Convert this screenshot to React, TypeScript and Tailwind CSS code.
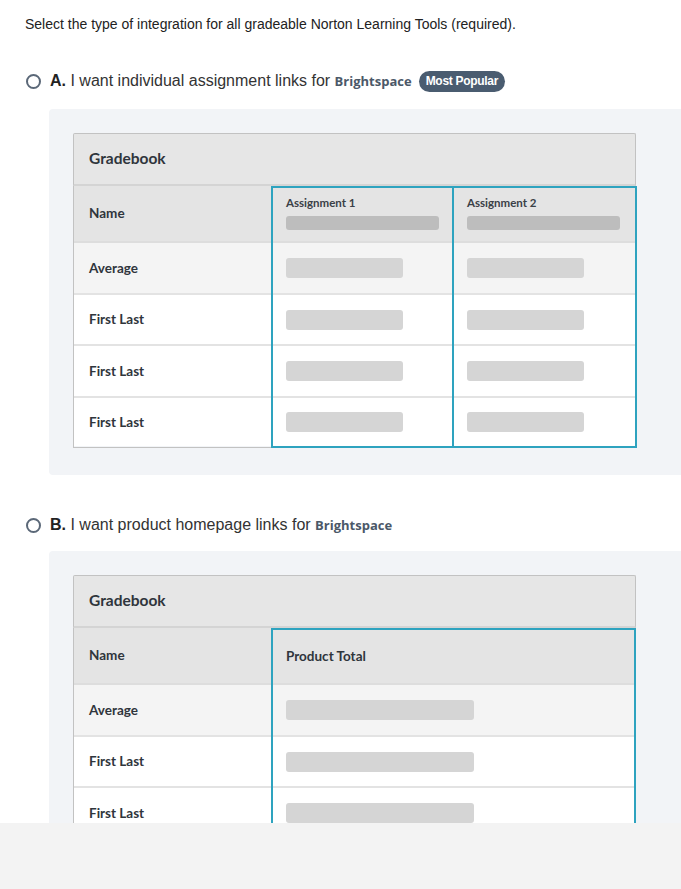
import React from 'react';

const teal = 'border-[#2ea3bf]';

const Bar = ({ w, head }: { w: string; head?: boolean }) => (
  <div className={`${w} ${head ? 'h-[14px] bg-[#bdbdbd]' : 'h-[20px] bg-[#d5d5d5]'} rounded-[3px]`} />
);

const rowStyles = [
  'h-[55px] bg-[#e4e4e4]',
  'h-[52px] bg-[#f4f4f4] border-t-2 border-[#dddddd]',
  'h-[51px] bg-white border-t-2 border-[#e3e3e3]',
  'h-[52px] bg-white border-t-2 border-[#e3e3e3]',
  'h-[50px] bg-white border-t-2 border-[#e3e3e3]',
];

const names = ['Name', 'Average', 'First Last', 'First Last', 'First Last'];

const NameColumn = () => (
  <div className="w-[198px] shrink-0 border-l border-b border-[#c2c2c2]">
    {names.map((n, i) => (
      <div key={i} className={`${rowStyles[i]} flex items-center pl-[15px]`}>
        <span className="text-[13.5px] font-bold text-[#2f353c]">{n}</span>
      </div>
    ))}
  </div>
);

const AssignmentColumn = ({ title, first }: { title: string; first?: boolean }) => (
  <div className={`w-[183px] shrink-0 border-t-2 border-b-2 border-r-2 ${first ? 'border-l-2' : ''} ${teal}`}>
    {rowStyles.map((r, i) =>
      i === 0 ? (
        <div key={i} className="h-[53px] bg-[#e4e4e4] flex flex-col pt-[7px] pl-[13px]">
          <span className="text-[11.5px] font-bold text-[#3a4047] leading-[15px]">{title}</span>
          <div className="mt-[6px]">
            <Bar w="w-[153px]" head />
          </div>
        </div>
      ) : (
        <div key={i} className={`${r} flex items-center pl-[13px]`}>
          <Bar w="w-[117px]" />
        </div>
      )
    )}
  </div>
);

const TotalColumn = () => (
  <div className={`w-[365px] shrink-0 border-2 ${teal}`}>
    {rowStyles.map((r, i) =>
      i === 0 ? (
        <div key={i} className="h-[53px] bg-[#e4e4e4] flex items-center pl-[13px]">
          <span className="text-[13.5px] font-bold text-[#2f353c]">Product Total</span>
        </div>
      ) : (
        <div key={i} className={`${r} flex items-center pl-[13px]`}>
          <Bar w="w-[188px]" />
        </div>
      )
    )}
  </div>
);

const Gradebook = ({ children }: { children: React.ReactNode }) => (
  <div className="w-[563px] font-['Lato',sans-serif]">
    <div className="h-[53px] bg-[#e6e6e6] border border-b-2 border-[#c2c2c2] border-b-[#d4d4d4] flex items-center pl-[15px] rounded-t-[2px]">
      <span className="text-[15.5px] font-bold text-[#2f353c]">Gradebook</span>
    </div>
    <div className="flex">
      <NameColumn />
      {children}
    </div>
  </div>
);

const Radio = () => (
  <span className="w-[15px] h-[15px] rounded-full border-2 border-[#5b6878] bg-white shrink-0" />
);

const Option = ({ letter, text, badge }: { letter: string; text: string; badge?: boolean }) => (
  <div className="flex items-center gap-[9px] pl-[26px] h-[24px] font-['Liberation_Sans',Arial,sans-serif]">
    <Radio />
    <span className="text-[16px] text-[#333333] whitespace-nowrap">
      <b className="text-[#222]">{letter}.</b> {text}{' '}
      <span className="font-['Open_Sans',sans-serif] font-bold text-[13px] text-[#4b5868]">Brightspace</span>
    </span>
    {badge && (
      <span className="ml-[-2px] h-[21px] px-[7px] rounded-full bg-[#4a5c70] text-white text-[12px] font-bold tracking-[-0.3px] flex items-center whitespace-nowrap">
        Most Popular
      </span>
    )}
  </div>
);

const Panel = ({ children, h }: { children: React.ReactNode; h: string }) => (
  <div className={`ml-[49px] ${h} bg-[#f2f4f7] rounded-l-[4px] pt-[24px] pl-[24px]`}>{children}</div>
);

export default function App() {
  return (
    <div className="w-full h-[889px] bg-white flex flex-col overflow-hidden">
      <div className="h-[823px] overflow-hidden shrink-0">
        <p className="pt-[16px] pl-[25px] text-[14px] leading-[17px] text-[#222] font-['Liberation_Sans',Arial,sans-serif]">
          Select the type of integration for all gradeable Norton Learning Tools (required).
        </p>
        <div className="mt-[36px]">
          <Option letter="A" text="I want individual assignment links for" badge />
        </div>
        <div className="mt-[16px]">
          <Panel h="h-[366px]">
            <Gradebook>
              <AssignmentColumn title="Assignment 1" first />
              <AssignmentColumn title="Assignment 2" />
            </Gradebook>
          </Panel>
        </div>
        <div className="mt-[38px]">
          <Option letter="B" text="I want product homepage links for" />
        </div>
        <div className="mt-[14px]">
          <Panel h="h-[366px]">
            <Gradebook>
              <TotalColumn />
            </Gradebook>
          </Panel>
        </div>
      </div>
      <div className="flex-1 bg-[#f3f3f3]" />
    </div>
  );
}
